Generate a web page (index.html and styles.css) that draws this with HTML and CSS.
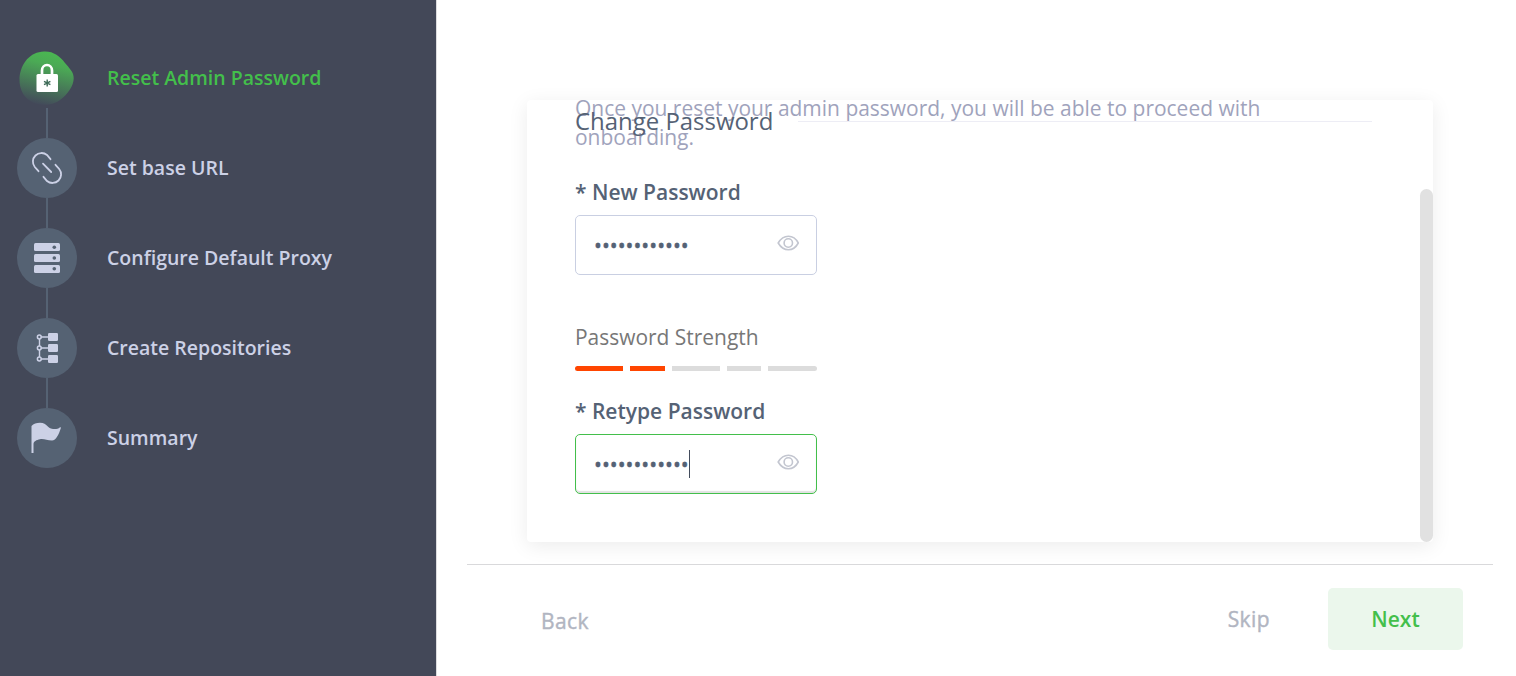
FILE: index.html
```html
<!DOCTYPE html>
<html lang="en">
<head>
<meta charset="utf-8">
<title>Reset Admin Password</title>
<link rel="stylesheet" href="styles.css">
</head>
<body>
<div class="wizard">
  <aside class="sidebar">
    <ol class="steps">
      <li class="step active">
        <svg class="step-icon" viewBox="0 0 60 60">
          <defs><linearGradient id="blob" x1=".62" y1="0" x2=".38" y2="1"><stop offset="0" stop-color="#4ab851"/><stop offset=".25" stop-color="#4baa55"/><stop offset="1" stop-color="#434a5a"/></linearGradient></defs>
          <path fill="url(#blob)" d="M27 3.500C36 3 43 8 48 15C52 20 57 24 56.700 30.500C56.500 38 51 46 43 52C37 57 26 58 17 55C8 51 2 43 2.500 30C4 15 13 4 27 3.500Z"/>
          <path fill="none" stroke="#fff" stroke-width="2.700" d="M25 28V22.500a5 5.500 0 0 1 10 0V28"/>
          <rect x="19.500" y="26" width="21.500" height="18" rx="1.500" fill="#fff"/>
          <path stroke="#3e6b57" stroke-width="1.400" d="M30.200 31.500v7M27 33.300l6.400 3.400M33.400 33.300l-6.400 3.400"/>
        </svg>
        <span class="step-label">Reset Admin Password</span>
      </li>
      <li class="step">
        <svg class="step-icon" viewBox="0 0 60 60">
          <circle cx="30" cy="30" r="30" fill="#556273"/>
          <path fill="none" stroke="#ccd1e6" stroke-width="1.800" stroke-linecap="round" d="M21.500 33.200L17.800 29A8.600 8.600 0 0 1 30 17L33.500 21.200M38.500 26.800L42.200 31A8.600 8.600 0 0 1 30 43L26.500 38.800M26 25.700L34.200 34"/>
        </svg>
        <span class="step-label">Set base URL</span>
      </li>
      <li class="step">
        <svg class="step-icon" viewBox="0 0 60 60">
          <circle cx="30" cy="30" r="30" fill="#556273"/>
          <g fill="#ccd1e6"><rect x="17" y="15" width="26" height="8" rx="1.500"/><rect x="17" y="26" width="26" height="8" rx="1.500"/><rect x="17" y="37" width="26" height="8" rx="1.500"/></g>
          <g fill="#556273"><circle cx="37.300" cy="19.300" r="1.800"/><circle cx="37.300" cy="30" r="1.800"/><circle cx="37.300" cy="40.700" r="1.800"/></g>
        </svg>
        <span class="step-label">Configure Default Proxy</span>
      </li>
      <li class="step">
        <svg class="step-icon" viewBox="0 0 60 60">
          <circle cx="30" cy="30" r="30" fill="#556273"/>
          <path stroke="#ccd1e6" stroke-width="1.400" d="M22.500 19v22M22.500 19H32M22.500 30H32M22.500 41H32"/>
          <g fill="#ccd1e6"><rect x="31" y="15" width="10" height="8" rx="1.200"/><rect x="31" y="26" width="10" height="8" rx="1.200"/><rect x="31" y="37" width="10" height="8" rx="1.200"/></g>
          <g fill="#556273" stroke="#ccd1e6" stroke-width="1.500"><circle cx="22.300" cy="19" r="1.900"/><circle cx="22.300" cy="30" r="1.900"/><circle cx="22.300" cy="41" r="1.900"/></g>
        </svg>
        <span class="step-label">Create Repositories</span>
      </li>
      <li class="step">
        <svg class="step-icon" viewBox="0 0 60 60">
          <circle cx="30" cy="30" r="30" fill="#556273"/>
          <path fill="#ccd1e6" d="M14.500 18C16.500 16 19.500 14.800 23 14.800C31 15 29.500 20.500 36 21C39 21.200 41 21 43 19.200C44 19 44 19.700 43.700 20.500C42 26 39 32.500 35 32.500C30 32.500 27 30.500 23 31.200C19.500 31.800 16.500 33.500 16.500 36V45H14.500Z"/>
        </svg>
        <span class="step-label">Summary</span>
      </li>
    </ol>
  </aside>
  <main class="main">
    <section class="panel">
      <div class="panel-body">
        <p class="intro">Once you reset your admin password, you will be able to proceed with onboarding.</p>
        <div class="heading"><h2>Change Password</h2></div>
        <label class="field-label">* New Password</label>
        <div class="field">
          <span class="dots">••••••••••••</span>
          <svg class="eye" viewBox="0 0 22 16"><g fill="none" stroke="#c3c6d0" stroke-width="1.600"><path d="M1.200 8C6.500-1 16.500-1 21.300 8C16.500 17 6.500 17 1.200 8Z"/><circle cx="11.300" cy="8" r="4.200"/></g></svg>
        </div>
        <p class="strength-label">Password Strength</p>
        <div class="strength"><i class="on"></i><i class="on"></i><i></i><i></i><i></i></div>
        <label class="field-label">* Retype Password</label>
        <div class="field focused">
          <span class="dots">••••••••••••</span><span class="caret"></span>
          <svg class="eye" viewBox="0 0 22 16"><g fill="none" stroke="#c3c6d0" stroke-width="1.600"><path d="M1.200 8C6.500-1 16.500-1 21.300 8C16.500 17 6.500 17 1.200 8Z"/><circle cx="11.300" cy="8" r="4.200"/></g></svg>
        </div>
      </div>
      <div class="track"><div class="thumb"></div></div>
    </section>
    <footer class="footer">
      <button class="btn back">Back</button>
      <button class="btn skip">Skip</button>
      <button class="btn next">Next</button>
    </footer>
  </main>
</div>
</body>
</html>
```
FILE: styles.css
```css
* { box-sizing: border-box; }
body { margin: 0; font-family: "Open Sans", sans-serif; background: #fff; }
.wizard { display: flex; width: 1516px; height: 676px; overflow: hidden; }
.sidebar { width: 436px; background: #434858; padding: 48px 17px; flex: none; }
.steps { list-style: none; margin: 0; padding: 0; display: grid; gap: 30px; }
.step { display: flex; align-items: center; gap: 30px; height: 60px; position: relative; color: #ccd1e6; }
.step:not(:last-child)::after { content: ""; position: absolute; left: 29px; top: 60px; width: 2px; height: 30px; background: #556273; }
.step-icon { width: 60px; height: 60px; flex: none; }
.step-label { font-size: 19.500px; font-weight: 600; line-height: 30px; white-space: nowrap; }
.active { color: #43bf4b; }
.main { flex: 1; border-left: 1px solid #dcdcde; padding: 100px 23px 0 30px; display: flex; flex-direction: column; }
.panel { width: 906px; height: 442px; margin-left: 60px; border-radius: 4px; display: flex; background: #fff; box-shadow: 0 4px 20px rgba(0,0,0,.08); flex: none; overflow: hidden; }
.panel-body { flex: 1; padding: 0 48px; color: #556275; }
.intro { margin: -6px 0 0; width: 720px; height: 58px; font-size: 20.980px; line-height: 29px; color: #9fa3bc; }
.heading { display: flex; align-items: center; gap: 25px; margin-top: -48px; height: 34px; }
.heading h2 { margin: 0; font-size: 23.950px; font-weight: 400; line-height: 34px; white-space: nowrap; }
.heading::after { content: ""; flex: 1; height: 1px; background: #ededf5; }
.field-label { display: block; font-size: 21px; font-weight: 600; line-height: 30px; white-space: nowrap; }
.heading + .field-label { margin-top: 39px; }
.field { width: 242px; height: 60px; margin-top: 8px; border: 1px solid #c9cfe2; border-radius: 5px; display: flex; align-items: center; padding: 0 17px 0 18px; }
.focused { border-color: #43bf4b; box-shadow: inset 0 -2px 1px #e2e2e2; }
.dots { font-size: 21px; line-height: 30px; -webkit-text-stroke: .4px #556275; }
.caret { width: 1px; height: 28px; background: #434c5c; }
.eye { width: 22px; height: 16px; margin: -4px 0 0 auto; }
.strength-label { margin: 47px 0 0; font-size: 20.950px; line-height: 30px; color: #777; }
.strength { width: 242px; height: 5px; margin: 14px 0 25px; display: grid; grid-template-columns: 48px 35px 48px 34px 49px; gap: 7px; border-radius: 2.500px; overflow: hidden; }
.strength i { background: #dcdcdc; }
.strength .on { background: #ff4500; }
.track { width: 13px; padding-top: 89px; }
.thumb { height: 353px; border-radius: 7px; background: #e1e1e1; }
.footer { margin-top: 22px; border-top: 1px solid #d9d9db; display: flex; align-items: flex-start; padding: 23px 30px 0 74px; }
.btn { border: 0; padding: 0; background: none; font: 600 21px/62px "Open Sans", sans-serif; color: #b1b5c1; white-space: nowrap; text-align: left; }
.back, .skip { font-weight: 400; letter-spacing: .4px; -webkit-text-stroke: .4px #b1b5c1; }
.back { padding-top: 2px; }
.skip { margin-left: auto; margin-right: 58px; }
.next { width: 135px; height: 62px; border-radius: 5px; background: #ebf7ec; color: #43bf4b; text-align: center; }
```
